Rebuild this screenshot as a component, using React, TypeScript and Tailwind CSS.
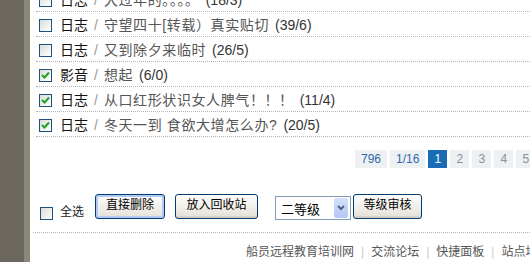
import React from "react";

const rows = [
  { cat: "日志", title: "大过年的。。。。", count: "(18/3)", checked: false },
  { cat: "日志", title: "守望四十[转载）真实贴切", count: "(39/6)", checked: false },
  { cat: "日志", title: "又到除夕来临时", count: "(26/5)", checked: false },
  { cat: "影音", title: "想起", count: "(6/0)", checked: true },
  { cat: "日志", title: "从口红形状识女人脾气！！！", count: "(11/4)", checked: true },
  { cat: "日志", title: "冬天一到 食欲大增怎么办?", count: "(20/5)", checked: true },
];

const pages = ["2", "3", "4", "5", "6"];

function XpCheckbox({ checked }: { checked: boolean }) {
  return (
    <span className="flex h-[13px] w-[13px] shrink-0 items-center justify-center border border-[#1c5180] bg-gradient-to-br from-[#dcdcd7] to-white">
      {checked && (
        <svg width="9" height="9" viewBox="0 0 9 9">
          <path d="M1 4 L3.5 6.5 L8 1.5" stroke="#21a121" strokeWidth="2" fill="none" />
        </svg>
      )}
    </span>
  );
}

function XpButton({ label, width, focused }: { label: string; width: string; focused?: boolean }) {
  return (
    <button
      className={`flex h-[25px] ${width} items-start justify-center rounded-[3px] border border-[#003c74] bg-gradient-to-b from-white to-[#e3e0d6] pt-[2px] text-[12px] leading-[16px] text-black ${
        focused ? "shadow-[inset_0_0_0_2px_#b2c8f5]" : "shadow-[inset_0_-2px_0_#d6d0c5]"
      }`}
    >
      {label}
    </button>
  );
}

export default function App() {
  return (
    <div className="flex h-[262px] w-[530px] overflow-hidden bg-white font-['Liberation_Sans','Noto_Sans_CJK_SC',sans-serif]">
      {/* left frame edge */}
      <div className="w-[24px] shrink-0 bg-[#6b675f]" />
      <div className="w-[6px] shrink-0 bg-[#8b877b]" />

      <div className="flex min-w-0 flex-1 flex-col">
        {/* list rows */}
        <div className="ml-[6px] mt-[-13px]">
          {rows.map((r, i) => (
            <div
              key={i}
              className="flex h-[25px] items-center whitespace-nowrap border-b border-dotted border-[#b5b5b5] pl-[3px] pt-[3px] text-[14px]"
            >
              <XpCheckbox checked={r.checked} />
              <span className="ml-[8px] text-[#111]">{r.cat}</span>
              <span className="px-[6px] text-[#999]">/</span>
              <span className="tracking-[0.6px] text-[#555]">{r.title}</span>
              <span className="ml-[6px] text-[#333]">{r.count}</span>
            </div>
          ))}
        </div>

        {/* pager */}
        <div className="mt-[13px] flex h-[18px] gap-[3px] whitespace-nowrap pl-[325px] text-[12px] leading-[18px]">
          <span className="shrink-0 bg-[#eef1f4] px-[6px] text-[#2f6aa8]">796</span>
          <span className="shrink-0 bg-[#eef1f4] px-[6px] text-[#2f6aa8]">1/16</span>
          <span className="w-[19px] shrink-0 bg-[#1a6bb5] text-center text-white">1</span>
          {pages.map((p) => (
            <span key={p} className="w-[19px] shrink-0 bg-[#eef1f4] text-center text-[#8a9099]">
              {p}
            </span>
          ))}
        </div>

        {/* actions */}
        <div className="mt-[26px] flex h-[26px] items-start pl-[10px] text-[12px]">
          <div className="mt-[13px]">
            <XpCheckbox checked={false} />
          </div>
          <span className="ml-[7px] mt-[9px] text-[#222]">全选</span>
          <div className="ml-[11px]">
            <XpButton label="直接删除" width="w-[70px]" focused />
          </div>
          <div className="ml-[10px]">
            <XpButton label="放入回收站" width="w-[83px]" />
          </div>
          <div className="ml-[17px] mt-[2px] flex h-[24px] w-[76px] items-center border border-[#7f9db9] bg-white">
            <span className="flex-1 pl-[5px] pt-[3px] text-[13px] text-black">二等级</span>
            <span className="mr-[2px] flex h-[20px] w-[14px] items-center justify-center rounded-[2px] bg-gradient-to-b from-[#d4e0fc] to-[#b3c7f7]">
              <svg width="8" height="6" viewBox="0 0 8 6">
                <path d="M1 1 L4 4 L7 1" stroke="#4d6185" strokeWidth="2" fill="none" />
              </svg>
            </span>
          </div>
          <div className="ml-[2px]">
            <XpButton label="等级审核" width="w-[69px]" />
          </div>
        </div>

        {/* divider */}
        <div className="ml-[3px] mt-[12px] border-t border-dotted border-[#b5b5b5]" />

        {/* footer links */}
        <div className="flex whitespace-nowrap pl-[216px] pt-[10px] text-[12px] text-[#555]">
          <span>船员远程教育培训网</span>
          <span className="px-[7px] text-[#ccc]">|</span>
          <span>交流论坛</span>
          <span className="px-[7px] text-[#ccc]">|</span>
          <span>快捷面板</span>
          <span className="px-[7px] text-[#ccc]">|</span>
          <span>站点地图</span>
        </div>
      </div>
    </div>
  );
}
